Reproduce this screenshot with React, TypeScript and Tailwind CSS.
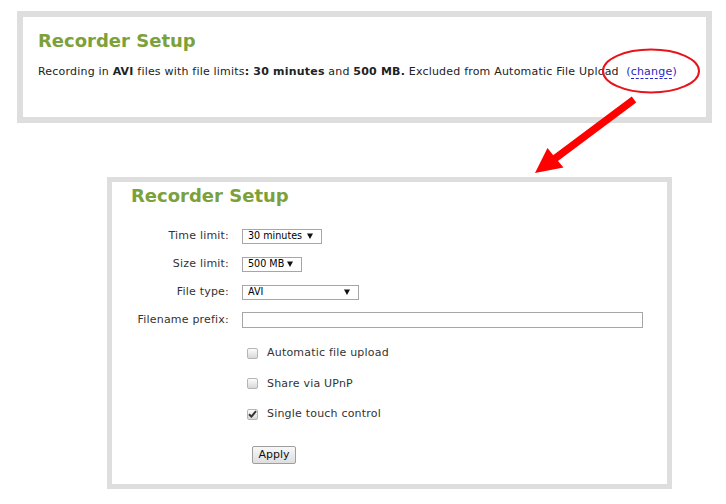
const FONT = "font-['DejaVu_Sans',Verdana,sans-serif]";

function Caret() {
  return (
    <svg width="6" height="6" viewBox="0 0 6 6" className="shrink-0">
      <path d="M0 0.5 H6 L3 6 Z" fill="#111" />
    </svg>
  );
}

function FakeSelect({ value, width }: { value: string; width: string }) {
  return (
    <div
      className={`${width} h-[15px] flex items-center justify-between pl-[5px] pr-[8px] border border-[#a6a6a6] bg-white text-[9.6px] text-black leading-none`}
    >
      <span>{value}</span>
      <Caret />
    </div>
  );
}

function Check({ checked, label }: { checked?: boolean; label: string }) {
  return (
    <div className="h-[30.5px] flex items-center pl-[5px]">
      <span className="w-[11px] h-[11px] rounded-[2px] border border-[#b5b5b5] bg-gradient-to-b from-[#fcfcfc] to-[#d8d8d8] flex items-center justify-center">
        {checked && (
          <svg width="9" height="8" viewBox="0 0 9 8">
            <path d="M1 4.2 L3.4 6.6 L8 1.2" stroke="#333" strokeWidth="2" fill="none" />
          </svg>
        )}
      </span>
      <span className="ml-[9px] text-[11px] tracking-[0.2px] text-[#333]">{label}</span>
    </div>
  );
}

function Row({ label, children }: { label: string; children: React.ReactNode }) {
  return (
    <>
      <div className="h-[28px] flex items-center justify-end text-[11px] tracking-[0.2px] text-[#333]">{label}</div>
      <div className="h-[28px] flex items-center">{children}</div>
    </>
  );
}

export default function App() {
  return (
    <div className={`relative w-[726px] h-[504px] bg-white overflow-hidden ${FONT}`}>
      {/* summary box */}
      <div className="ml-[17px] mt-[11px] w-[695px] h-[112px] border-[6px] border-[#dedede] pl-[15px] pt-[13px]">
        <h2 className="text-[18px] leading-[22px] font-bold text-[#7da13a]">Recorder Setup</h2>
        <p className="mt-[12px] text-[11px] leading-[15px] tracking-[0.2px] text-[#222] whitespace-nowrap">
          Recording in <b>AVI</b> files with file limits<b>: 30 minutes</b> and <b>500 MB.</b> Excluded from
          Automatic File Upload&nbsp; <span className="text-[#2626c9]">(<span className="border-b border-dashed border-[#2626c9]">change</span>)</span>
        </p>
      </div>

      {/* expanded form */}
      <div className="ml-[107px] mt-[54px] w-[565px] h-[312px] border-[5px] border-[#dedede] pl-[19px] pt-[3px]">
        <h2 className="text-[18px] leading-[22px] font-bold text-[#7da13a]">Recorder Setup</h2>
        <div className="mt-[15px] grid grid-cols-[98px_1fr] gap-x-[13px]">
          <Row label="Time limit:">
            <FakeSelect value="30 minutes" width="w-[80px]" />
          </Row>
          <Row label="Size limit:">
            <FakeSelect value="500 MB" width="w-[60px]" />
          </Row>
          <Row label="File type:">
            <FakeSelect value="AVI" width="w-[117px]" />
          </Row>
          <Row label="Filename prefix:">
            <div className="w-[401px] h-[16px] border border-[#a6a6a6] bg-white" />
          </Row>
          <div />
          <div className="mt-[4px]">
            <Check label="Automatic file upload" />
            <Check label="Share via UPnP" />
            <Check checked label="Single touch control" />
            <button className="mt-[16px] ml-[10px] w-[44px] h-[18px] rounded-[2px] border border-[#9e9e9e] bg-gradient-to-b from-[#f8f8f8] to-[#dedede] text-[11px] leading-none text-[#111]">
              Apply
            </button>
          </div>
        </div>
      </div>

      {/* annotation overlay */}
      <svg className="absolute inset-0 pointer-events-none" width="726" height="504" viewBox="0 0 726 504">
        <ellipse cx="651" cy="71" rx="48" ry="21.5" fill="none" stroke="#e8141c" strokeWidth="2" />
        <line x1="634" y1="99.5" x2="553" y2="160" stroke="#ff0000" strokeWidth="7.5" />
        <path d="M535 173 L547.5 148 L555 157.5 L563.5 167.5 Z" fill="#ff0000" />
      </svg>
    </div>
  );
}
